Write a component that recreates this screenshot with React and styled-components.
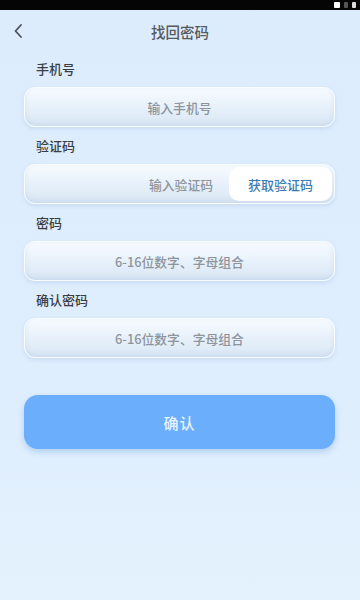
import styled, { createGlobalStyle } from "styled-components";

const GlobalStyle = createGlobalStyle`
  html, body {
    margin: 0;
    padding: 0;
    background: #ddeefd;
  }
  * {
    box-sizing: border-box;
  }
`;

const Screen = styled.div`
  width: 360px;
  height: 600px;
  display: flex;
  flex-direction: column;
  background: linear-gradient(180deg, #dcecfd 0%, #dfeefd 70%, #e4f2fd 100%);
  font-family: "Noto Sans CJK SC", "Noto Sans", sans-serif;
  overflow: hidden;
`;

const StatusBar = styled.div`
  height: 10px;
  background: #050505;
  display: flex;
  justify-content: flex-end;
  align-items: center;
  gap: 4px;
  padding-right: 4px;
`;

const StatusDot = styled.span`
  width: ${(p) => p.w}px;
  height: 6px;
  background: ${(p) => p.c};
  border-radius: 1px;
`;

const Header = styled.div`
  height: 42px;
  display: flex;
  align-items: center;
  justify-content: center;
  position: relative;
`;

const Back = styled.div`
  position: absolute;
  left: 12px;
  top: 12px;
  width: 14px;
  height: 18px;
  display: flex;
`;

const Title = styled.div`
  font-size: 14.5px;
  font-weight: 500;
  color: #555a60;
`;

const Form = styled.div`
  display: flex;
  flex-direction: column;
  padding: 0 25px 0 24px;
`;

const Label = styled.div`
  font-size: 13px;
  font-weight: 500;
  color: #3a3e44;
  padding-left: 12px;
  height: 18px;
  line-height: 18px;
  margin-top: ${(p) => p.top}px;
  margin-bottom: 9px;
`;

const Field = styled.div`
  height: 40px;
  border-radius: 11px;
  display: flex;
  align-items: center;
  background: linear-gradient(180deg, #f7fbff 0%, #e6f0fa 55%, #d8e6f4 100%);
  border: 1.5px solid #f8fcff;
  box-shadow: 0 2px 4px rgba(160, 190, 220, 0.35),
    inset 0 -2px 4px rgba(190, 210, 232, 0.5);
  padding: 2px;
`;

const Placeholder = styled.div`
  flex: 1;
  text-align: center;
  font-size: 12.8px;
  font-weight: 500;
  color: #8e949c;
  padding-left: ${(p) => (p.shift ? "106px" : "0")};
`;

const CodeButton = styled.div`
  width: 103px;
  height: 100%;
  border-radius: 10px;
  background: #ffffff;
  display: flex;
  align-items: center;
  justify-content: center;
  font-size: 13px;
  font-weight: 500;
  color: #3d7bb0;
`;

const Submit = styled.div`
  margin-top: 37px;
  height: 54px;
  border-radius: 14px;
  background: #6aaefc;
  box-shadow: 0 3px 6px rgba(90, 150, 230, 0.35);
  display: flex;
  align-items: center;
  justify-content: center;
  font-size: 15px;
  font-weight: 500;
  color: #e8f3ff;
  letter-spacing: 1px;
`;

export default function App() {
  return (
    <>
      <GlobalStyle />
      <Screen>
        <StatusBar>
          <StatusDot w={6} c="#ffffff" />
          <StatusDot w={4} c="#555" />
          <StatusDot w={4} c="#ddd" />
        </StatusBar>
        <Header>
          <Back>
            <svg width="14" height="18" viewBox="0 0 14 18">
              <path
                d="M9 3 L3.5 9 L9 15"
                fill="none"
                stroke="#4a5058"
                strokeWidth="1.8"
                strokeLinecap="round"
                strokeLinejoin="round"
              />
            </svg>
          </Back>
          <Title>找回密码</Title>
        </Header>
        <Form>
          <Label top={8}>手机号</Label>
          <Field>
            <Placeholder>输入手机号</Placeholder>
          </Field>
          <Label top={10}>验证码</Label>
          <Field>
            <Placeholder shift>输入验证码</Placeholder>
            <CodeButton>获取验证码</CodeButton>
          </Field>
          <Label top={10}>密码</Label>
          <Field>
            <Placeholder>6-16位数字、字母组合</Placeholder>
          </Field>
          <Label top={10}>确认密码</Label>
          <Field>
            <Placeholder>6-16位数字、字母组合</Placeholder>
          </Field>
          <Submit>确认</Submit>
        </Form>
      </Screen>
    </>
  );
}
